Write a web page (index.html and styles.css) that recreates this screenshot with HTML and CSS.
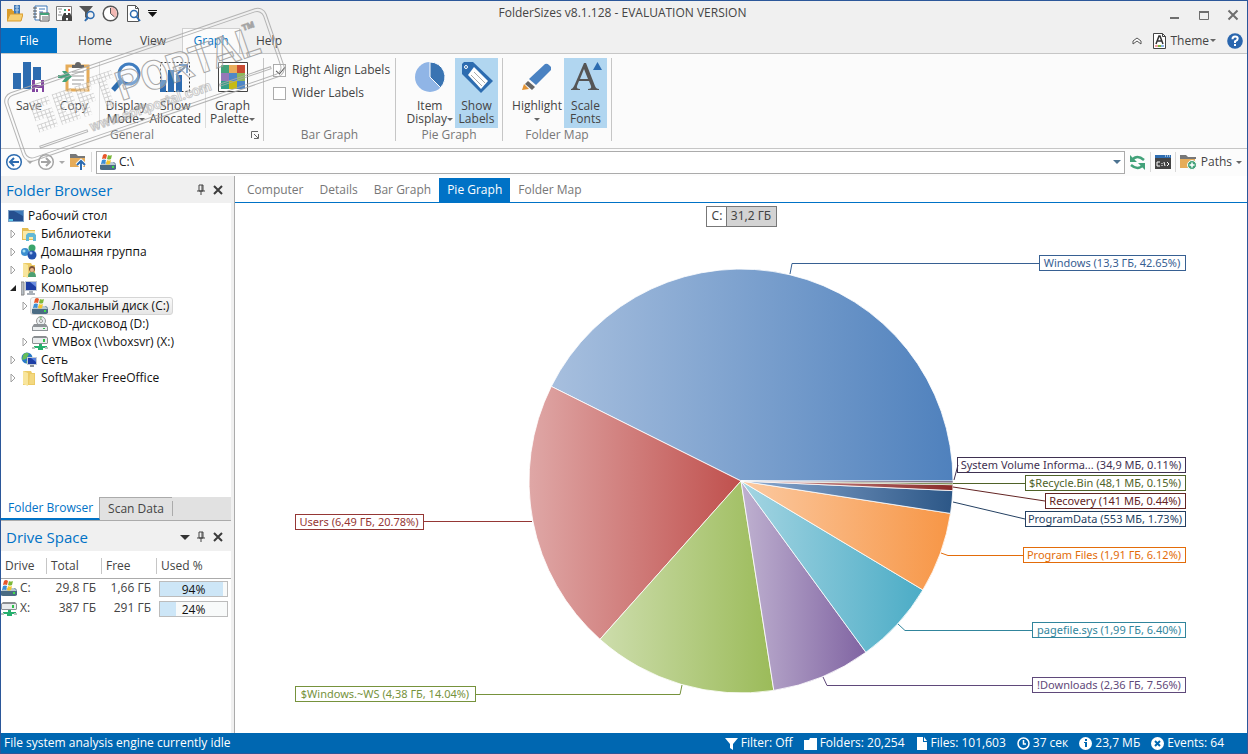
FILE: index.html
```html
<!DOCTYPE html>
<html lang="en">
<head>
    <meta charset="UTF-8">
    <meta name="viewport" content="width=device-width, initial-scale=1.0">
    <title>FolderSizes</title>
    <link rel="stylesheet" href="styles.css">
</head>
<body>
    <!-- Shared icons -->
    <svg width="0" height="0" class="defs" aria-hidden="true">
        <symbol id="drive-win" viewBox="0 0 16 16">
            <path d="M1 10l2-2h11l2 2v5H1z" fill="#5d7f96"/>
            <path d="M0 11h16v4q-1 1-2 1H2q-2 0-2-1z" fill="#4b6c84"/>
            <path d="M0 11l3-3h10l3 3z" fill="#b9c8d2"/>
            <path d="M12 12h2v2h-2z" fill="#3fe04a"/>
            <path d="M3 1q2-2 4 0L6 5Q4 4 2 5z" fill="#e8562a"/>
            <path d="M8 1q2 1 4 0l-1 4q-2 1-4 0z" fill="#7cb83a"/>
            <path d="M2 6q2-1 4 0L5 10Q3 9 1 10z" fill="#3a8fd8"/>
            <path d="M7 6q2 1 4 0l-1 4q-2 1-4 0z" fill="#f5c52c"/>
        </symbol>
        <symbol id="drive-net" viewBox="0 0 16 16">
            <path d="M2 2h12l2 2v5l-1 1H1L0 9V4z" fill="#8b8f92"/>
            <path d="M1 4h14v5H1z" fill="#e9ecee"/>
            <path d="M11 5h2v3h-2z" fill="#2fc14a"/>
            <path d="M7 10h3v2h5v2h-4v2H6v-2H2v-2h5z" fill="#25b06e"/>
            <path d="M0 13h3v2H0zM13 13h3v2h-3z" fill="#b7c3bd"/>
        </symbol>
        <symbol id="folder" viewBox="0 0 16 16">
            <path d="M2 1h8l1 2h3v12H2z" fill="#eccb66"/>
            <path d="M2 1l5 2v13l-5-2z" fill="#f8e59c"/>
            <path d="M9 4h4v10H8z" fill="#f3d880"/>
        </symbol>
        <symbol id="pin" viewBox="0 0 10 12">
            <path d="M3 1h4v6H3zM6 1v6M1 7h8M5 7v4" fill="none" stroke="#444"/>
        </symbol>
        <symbol id="close" viewBox="0 0 12 12">
            <path d="M2 2l8 8M10 2l-8 8" fill="none" stroke="#3c3c3c" stroke-width="2"/>
        </symbol>
        <symbol id="expand" viewBox="0 0 8 10">
            <path d="M2 1l4 4-4 4z" fill="#fff" stroke="#a0a0a0"/>
        </symbol>
    </svg>

    <div class="window">
        <header class="titlebar">
            <div class="quick">
                <button class="icon-btn" aria-label="Open"><svg width="16" height="18" viewBox="0 0 16 18"><path d="M0 5h5l1 2h7v9H0z" fill="#d99b2b"/><path d="M7 1h6v10H7z" fill="#3f79b7"/><path d="M8 3h4M8 6h4M10 1v9" stroke="#b8d3ee"/><path d="M3 10h13l-2 7H0z" fill="#f6cf73" stroke="#d99b2b"/></svg></button>
                <button class="icon-btn" aria-label="Report"><svg width="17" height="17" viewBox="0 0 17 17"><path d="M2 1h12v14H2z" fill="#fff" stroke="#3f79b7"/><path d="M0 3h4M0 6h4M0 9h4M0 12h4" stroke="#555"/><path d="M6 4h6M6 7h4" stroke="#3f79b7"/><path d="M7 8h9v8H7z" fill="#fff" stroke="#555"/><path d="M7 9h9" stroke="#43a27a" stroke-width="2"/><path d="M9 12h6M9 14h6" stroke="#666"/></svg></button>
                <button class="icon-btn" aria-label="Analyze"><svg width="17" height="17" viewBox="0 0 17 17"><path d="M.5 1.500h15v14H.5z" fill="#fff" stroke="#777"/><path d="M2 4h4M3 7h2M2 10h4" stroke="#888"/><path d="M8 4h2v2H8z" fill="#3ba17b"/><path d="M12 4h2v2h-2z" fill="#cf4537"/><path d="M6 16v-4l2-4h2v2h2V8h2l2 4v4h-4v-3h-2v3z" fill="#444"/></svg></button>
                <button class="icon-btn" aria-label="Filter"><svg width="17" height="17" viewBox="0 0 17 17"><path d="M0 1h14L9 7v8l-3-3V7z" fill="#555"/><circle cx="11.500" cy="10" r="3.500" fill="#f0f0f0" stroke="#2e6cb0" stroke-width="1.500"/><path d="M9 12l-3 4" stroke="#2e6cb0" stroke-width="2"/></svg></button>
                <button class="icon-btn" aria-label="Schedule"><svg width="17" height="17" viewBox="0 0 17 17"><circle cx="8.500" cy="8.500" r="7.300" fill="#fff" stroke="#555" stroke-width="1.500"/><path d="M8.500 2a6.500 6.500 0 0 1 5 10.500l-5-4z" fill="#f3b9b4"/><path d="M8.500 3v5.500l4 3.500" fill="none" stroke="#555"/></svg></button>
                <button class="icon-btn" aria-label="Preview"><svg width="17" height="17" viewBox="0 0 17 17"><path d="M2.500.5h8l3 3v13h-11z" fill="#fff" stroke="#555"/><path d="M10.500.5v3h3" fill="none" stroke="#555"/><circle cx="9" cy="9" r="3.500" fill="#fff" stroke="#2e6cb0" stroke-width="1.500"/><path d="M11 11l4 5" stroke="#2e6cb0" stroke-width="2"/></svg></button>
                <button class="icon-btn narrow" aria-label="Customize"><svg width="9" height="8" viewBox="0 0 9 8"><path d="M0 1.500h9" stroke="#111"/><path d="M0 3h9L4.500 8z" fill="#111"/></svg></button>
            </div>
            <div class="caption">FolderSizes v8.1.128 - EVALUATION VERSION</div>
            <div class="controls">
                <button class="icon-btn" aria-label="Minimize"><svg width="12" height="12"><path d="M1 9h9" stroke="#6e6e6e" stroke-width="2"/></svg></button>
                <button class="icon-btn" aria-label="Maximize"><svg width="12" height="12"><path d="M1.500 2.500h9v8h-9z" fill="none" stroke="#6e6e6e"/><path d="M1 3h10" stroke="#6e6e6e" stroke-width="2"/></svg></button>
                <button class="icon-btn" aria-label="Close"><svg width="12" height="12"><path d="M1.500 1.500l9 9M10.500 1.500l-9 9" stroke="#6e6e6e" stroke-width="2"/></svg></button>
            </div>
        </header>

        <nav class="menu">
            <button class="menu-file">File</button>
            <button class="menu-tab">Home</button>
            <button class="menu-tab">View</button>
            <button class="menu-tab active">Graph</button>
            <button class="menu-tab">Help</button>
            <div class="menu-right">
                <button class="icon-btn" aria-label="Collapse ribbon"><svg width="10" height="8"><path d="M1 4l4-3 4 3v3L5 4 1 7z" fill="#fff" stroke="#555"/></svg></button>
                <button class="theme">
                    <svg width="13" height="16" viewBox="0 0 13 16"><path d="M.5.5h9l3 3v12H.5z" fill="#fff" stroke="#444"/><path d="M9.500.5v3h3" fill="none" stroke="#444"/><path d="M3 11l3-8h1l3 8M4 8h5" fill="none" stroke="#333" stroke-width="1.500"/><path d="M2 12h3v2H2z" fill="#f0a0a0"/><path d="M5 12h3v2H5z" fill="#7cb83a"/><path d="M8 12h3v2H8z" fill="#8ab4e8"/></svg>
                    Theme<span class="caret"></span>
                </button>
                <button class="icon-btn" aria-label="Help"><svg width="16" height="16" viewBox="0 0 16 16"><circle cx="8" cy="8" r="7.800" fill="#2a66ae"/><path d="M5.500 6.200q0-2.700 2.600-2.700t2.600 2.300Q10.700 7.200 8 8.400V10" fill="none" stroke="#fff" stroke-width="2"/><path d="M7 11h2v2H7z" fill="#fff"/></svg></button>
            </div>
        </nav>

        <section class="ribbon">
            <div class="group general">
                <div class="group-body">
                    <button class="tool">
                        <svg width="32" height="32" viewBox="0 0 32 32"><path d="M0 12h8v16H0zM10 1h8v27h-8zM20 6h8v14h-8z" fill="#2d6cb0"/><path d="M19 19h12v12H19z" fill="#8246a0"/><path d="M22 19h6v5h-6zM22 27h7v4h-7z" fill="#fff"/><path d="M23 28h2v3h-2z" fill="#8246a0"/></svg>
                        <span>Save</span>
                    </button>
                    <button class="tool">
                        <svg width="32" height="32" viewBox="0 0 32 32"><path d="M9 5h21v24H9z" fill="#fff" stroke="#e6ac59" stroke-width="3"/><path d="M14 7V4h3a3 3 0 0 1 6 0h3v3z" fill="#666"/><path d="M14 11h12M14 15h12M14 19h12M14 23h9" stroke="#999"/><path d="M0 14h7l-3-4h4l6 5.500L8 21H4l3-4H0z" fill="#43a27a"/></svg>
                        <span>Copy</span>
                    </button>
                    <i class="tool-sep"></i>
                    <button class="tool">
                        <svg width="32" height="32" viewBox="0 0 32 32"><circle cx="19" cy="13" r="10" fill="#fafcff" stroke="#3f7dc0" stroke-width="3"/><path d="M11 20L3 29" stroke="#2d6cb0" stroke-width="5"/></svg>
                        <span>Display<br>Mode<i class="caret"></i></span>
                    </button>
                    <button class="tool">
                        <svg width="32" height="32" viewBox="0 0 32 32"><path d="M1.500 1.500h29v29h-29z" fill="none" stroke="#333" stroke-dasharray="2 2"/><path d="M1 19h6v12H1zM9 9h6v22H9zM17 14h6v17h-6z" fill="#2d6cb0"/><path d="M17 14l9-8M20 4h8v8" fill="none" stroke="#4a82c2" stroke-width="2"/></svg>
                        <span>Show<br>Allocated</span>
                    </button>
                    <i class="tool-sep"></i>
                    <button class="tool">
                        <svg width="32" height="32" viewBox="0 0 32 32"><path d="M1.500 1.500h29v29h-29z" fill="#fff" stroke="#444"/><path d="M4 4h8v8H4z" fill="#43a27a"/><path d="M12 4h8v8h-8z" fill="#e9ac5b"/><path d="M20 4h8v8h-8z" fill="#c94b33"/><path d="M4 12h8v8H4z" fill="#9578b8"/><path d="M12 12h8v8h-8z" fill="#4f87c7"/><path d="M20 12h8v8h-8z" fill="#8fb75a"/><path d="M4 20h8v8H4z" fill="#37a087"/><path d="M12 20h8v8h-8z" fill="#c7bb14"/><path d="M20 20h8v8h-8z" fill="#4f87c7"/></svg>
                        <span>Graph<br>Palette<i class="caret"></i></span>
                    </button>
                </div>
                <div class="group-title">General</div>
                <button class="launcher" aria-label="General options"><svg width="8" height="8"><path d="M.5 7V.5H7M3 3l4 4M7.500 3v4.500H3" fill="none" stroke="#666"/></svg></button>
            </div>
            <div class="group bar">
                <div class="group-body checks">
                    <label><input type="checkbox" checked>Right Align Labels</label>
                    <label><input type="checkbox">Wider Labels</label>
                </div>
                <div class="group-title">Bar Graph</div>
            </div>
            <div class="group pie">
                <div class="group-body">
                    <button class="tool">
                        <svg width="32" height="32" viewBox="0 0 32 32"><circle cx="16" cy="16" r="15" fill="#90b5e6"/><path d="M16 16V1a15 15 0 0 1 10.600 25.600z" fill="#3a74b2" stroke="#fff"/></svg>
                        <span>Item<br>Display<i class="caret"></i></span>
                    </button>
                    <button class="tool pressed">
                        <svg width="32" height="32" viewBox="0 0 32 32"><path d="M3 1h9l20 19-12 12L1 13V3z" fill="#2d6cb0"/><path d="M13 6l14 14-7 8L7 14z" fill="#fff"/><circle cx="5" cy="6" r="1.500" fill="none" stroke="#fff"/><path d="M13 11l11 11M10 14l11 11" stroke="#aaa"/></svg>
                        <span>Show<br>Labels</span>
                    </button>
                </div>
                <div class="group-title">Pie Graph</div>
            </div>
            <div class="group map">
                <div class="group-body">
                    <button class="tool">
                        <svg width="32" height="32" viewBox="0 0 32 32"><path d="M8 18L24 3q2-1 4 1l2 2v3L15 24z" fill="#4a82c2"/><path d="M7 20l7 6-3 3-7-6z" fill="#666"/><path d="M3 23l5 5-7 1z" fill="#e39435"/></svg>
                        <span>Highlight<br><i class="caret"></i></span>
                    </button>
                    <button class="tool pressed">
                        <svg width="32" height="32" viewBox="0 0 32 32"><path d="M1 29v-1q2 0 4-5L14 2h2l9 23q1 3 4 3v1H18v-1q4 0 3-3l-2-5H9l-2 5q-1 3 3 3v1zM10 18h8L14 8z" fill="#555"/><path d="M23 9l4.500-8L32 9z" fill="#2d6cb0"/></svg>
                        <span>Scale<br>Fonts</span>
                    </button>
                </div>
                <div class="group-title">Folder Map</div>
            </div>
        </section>

        <div class="navbar">
            <button class="icon-btn" aria-label="Back"><svg width="18" height="18" viewBox="0 0 18 18"><circle cx="9" cy="9" r="7.300" fill="#fff" stroke="#2d6cb0" stroke-width="1.500"/><path d="M14 9H5M9 5L5 9l4 4" fill="none" stroke="#2d6cb0" stroke-width="2"/></svg></button>
            <i class="caret dim"></i>
            <button class="icon-btn" aria-label="Forward"><svg width="18" height="18" viewBox="0 0 18 18"><circle cx="9" cy="9" r="7.300" fill="#fff" stroke="#a5a5a5" stroke-width="1.500"/><path d="M4 9h9M9 5l4 4-4 4" fill="none" stroke="#a5a5a5" stroke-width="2"/></svg></button>
            <i class="caret dim"></i>
            <button class="icon-btn" aria-label="Up"><svg width="18" height="18" viewBox="0 0 18 18"><path d="M1 1h6l2 2h7v2H1z" fill="#777"/><path d="M1 5h15v9H1z" fill="#e6ac59"/><path d="M12 16V8M8 12l4-4 4 4" fill="none" stroke="#fff" stroke-width="4"/><path d="M12 17V8M8 12l4-4 4 4" fill="none" stroke="#2d6cb0" stroke-width="2"/></svg></button>
            <i class="nav-sep"></i>
            <div class="address">
                <svg width="16" height="16"><use href="#drive-win"/></svg>
                <input type="text" value="C:\" aria-label="Path">
                <button class="icon-btn" aria-label="Path history"><i class="caret blue"></i></button>
            </div>
            <button class="icon-btn" aria-label="Refresh"><svg width="17" height="17" viewBox="0 0 17 17"><path d="M3 6q5-6 12 0M14 11q-5 6-12 0" fill="none" stroke="#43a27a" stroke-width="2.500"/><path d="M1 1v7h7zM16 16V9H9z" fill="#43a27a"/></svg></button>
            <i class="nav-sep"></i>
            <button class="icon-btn" aria-label="Command prompt"><svg width="16" height="14" viewBox="0 0 16 14"><path d="M0 0h16v14H0z" fill="#444"/><path d="M0 0h16v3H0z" fill="#2d6cb0"/><path d="M10 1h1M12 1h1M14 1h1" stroke="#fff"/><path d="M5 7H2v4h3M7 8v1M7 10v1M9 7l1 4M12 7l2 2-2 2" fill="none" stroke="#fff"/></svg></button>
            <i class="nav-sep"></i>
            <button class="paths">
                <svg width="17" height="16" viewBox="0 0 17 16"><path d="M0 1h6l2 2h8v2H0z" fill="#777"/><path d="M0 5h15v9H0z" fill="#e6ac59"/><circle cx="12" cy="11" r="4.500" fill="#43a27a" stroke="#fff"/><path d="M9.500 11h5M12 8.500v5" stroke="#fff" stroke-width="1.500"/></svg>
                Paths <i class="caret"></i>
            </button>
        </div>

        <div class="workspace">
            <aside class="sidebar">
                <div class="panel-head">
                    <h2>Folder Browser</h2>
                    <button class="icon-btn" aria-label="Pin"><svg width="10" height="12"><use href="#pin"/></svg></button>
                    <button class="icon-btn" aria-label="Close panel"><svg width="12" height="12"><use href="#close"/></svg></button>
                </div>
                <ul class="tree">
                    <li class="root"><svg width="16" height="16" viewBox="0 0 16 16"><path d="M0 2h16v12H0z" fill="#7ba0c6"/><path d="M1 3h14v10H1z" fill="#254f8f"/><path d="M6 3h9v5z" fill="#3d79b8"/><path d="M1 11h4v2H1z" fill="#55c3e8"/></svg><span>Рабочий стол</span></li>
                    <li><svg width="8" height="10"><use href="#expand"/></svg><svg width="16" height="16" viewBox="0 0 16 16"><path d="M1 2h6l1 2h6v10H1z" fill="#e5bd52"/><path d="M2 5h12v8H2z" fill="#f9e9a8"/><path d="M5 9l2-2h6l2 2v6h-3v-4H8v4H5z" fill="#62b8d6"/></svg><span>Библиотеки</span></li>
                    <li><svg width="8" height="10"><use href="#expand"/></svg><svg width="16" height="16" viewBox="0 0 16 16"><circle cx="11" cy="4" r="3.500" fill="#3aa56c"/><circle cx="4" cy="8" r="4" fill="#3c8fd0"/><circle cx="11" cy="11" r="4.500" fill="#2353ad"/><circle cx="3" cy="7" r="1.500" fill="#a5ddf2"/><circle cx="10" cy="9" r="1.500" fill="#9dbdf0"/></svg><span>Домашняя группа</span></li>
                    <li><svg width="8" height="10"><use href="#expand"/></svg><svg width="16" height="16" viewBox="0 0 16 16"><use href="#folder"/><circle cx="11" cy="7" r="3" fill="#7b5138"/><circle cx="11" cy="8" r="2" fill="#eab78d"/><path d="M7 15q0-5 4-5t4 5z" fill="#4c9f72"/></svg><span>Paolo</span></li>
                    <li><svg width="8" height="10"><path d="M7 2v6H1z" fill="#222"/></svg><svg width="16" height="16" viewBox="0 0 16 16"><path d="M0 2h3v13H0z" fill="#b8bfc6" stroke="#888"/><path d="M4 1h12v10H4z" fill="#c3cbd5"/><path d="M5 2h10v8H5z" fill="#1d3ea5"/><path d="M9 2h6v5z" fill="#6b8de0"/><path d="M8 11h4v2h2v2H6v-2h2z" fill="#aab1b9"/></svg><span>Компьютер</span></li>
                    <li class="child selected"><svg width="8" height="10"><use href="#expand"/></svg><div class="node"><svg width="16" height="16"><use href="#drive-win"/></svg><span>Локальный диск (C:)</span></div></li>
                    <li class="child"><svg width="8" height="10"></svg><div class="node"><svg width="16" height="16" viewBox="0 0 16 16"><circle cx="9" cy="5" r="4.500" fill="#e9eef0" stroke="#999"/><circle cx="9" cy="5" r="1.500" fill="#fff" stroke="#999"/><path d="M7 1l2 3 1-3z" fill="#8fc98f"/><path d="M0 11l2-3h12l2 3v4H0z" fill="#8f9498"/><path d="M1 11h14v3H1z" fill="#eceff0"/><path d="M11 12h2v1h-2z" fill="#2fc14a"/></svg><span>CD-дисковод (D:)</span></div></li>
                    <li class="child"><svg width="8" height="10"><use href="#expand"/></svg><div class="node"><svg width="16" height="16"><use href="#drive-net"/></svg><span>VMBox (\\vboxsvr) (X:)</span></div></li>
                    <li><svg width="8" height="10"><use href="#expand"/></svg><svg width="16" height="16" viewBox="0 0 16 16"><circle cx="6" cy="6" r="5.500" fill="#2a79c8"/><path d="M2 3q3-4 6-1L5 7 1 8zM5 9l3 1-2 2z" fill="#66bd58"/><path d="M6 5h10v8H6z" fill="#c3cbd5"/><path d="M7 6h8v6H7z" fill="#1d3ea5"/><path d="M10 6h5v4z" fill="#5680de"/><path d="M9 13h4v2H9z" fill="#8b939b"/></svg><span>Сеть</span></li>
                    <li><svg width="8" height="10"><use href="#expand"/></svg><svg width="16" height="16"><use href="#folder"/></svg><span>SoftMaker FreeOffice</span></li>
                </ul>
                <div class="side-tabs">
                    <button class="side-tab active">Folder Browser</button>
                    <button class="side-tab">Scan Data</button>
                    <i class="side-sep"></i>
                </div>
                <div class="panel-head drives-head">
                    <h2>Drive Space</h2>
                    <button class="icon-btn" aria-label="Panel menu"><i class="caret big"></i></button>
                    <button class="icon-btn" aria-label="Pin"><svg width="10" height="12"><use href="#pin"/></svg></button>
                    <button class="icon-btn" aria-label="Close panel"><svg width="12" height="12"><use href="#close"/></svg></button>
                </div>
                <div class="drives">
                    <table>
                        <thead>
                            <tr><th class="c-drive"><span>Drive</span></th><th class="c-size"><span>Total</span></th><th class="c-size"><span>Free</span></th><th><span>Used %</span></th></tr>
                        </thead>
                        <tbody>
                            <tr>
                                <td><div class="drive"><svg width="16" height="16"><use href="#drive-win"/></svg>C:</div></td>
                                <td class="num">29,8 ГБ</td>
                                <td class="num">1,66 ГБ</td>
                                <td><div class="usage"><div class="fill" style="width: 94%"></div><span>94%</span></div></td>
                            </tr>
                            <tr>
                                <td><div class="drive"><svg width="16" height="16"><use href="#drive-net"/></svg>X:</div></td>
                                <td class="num">387 ГБ</td>
                                <td class="num">291 ГБ</td>
                                <td><div class="usage"><div class="fill" style="width: 24%"></div><span>24%</span></div></td>
                            </tr>
                        </tbody>
                    </table>
                </div>
            </aside>

            <main class="content">
                <div class="tabs">
                    <button class="tab">Computer</button>
                    <button class="tab">Details</button>
                    <button class="tab">Bar Graph</button>
                    <button class="tab active">Pie Graph</button>
                    <button class="tab">Folder Map</button>
                </div>
                <div class="chart">
                    <svg class="pie-svg" viewBox="0 0 1012 530" role="img" aria-label="Space used on C:">
                        <defs>
                            <linearGradient id="g-win"><stop offset="0" stop-color="#a7bfde"/><stop offset="1" stop-color="#4f81bd"/></linearGradient>
                            <linearGradient id="g-users"><stop offset="0" stop-color="#dfa7a6"/><stop offset="1" stop-color="#c0504d"/></linearGradient>
                            <linearGradient id="g-ws"><stop offset="0" stop-color="#cdddac"/><stop offset="1" stop-color="#9bbb59"/></linearGradient>
                            <linearGradient id="g-down"><stop offset="0" stop-color="#bfb1d0"/><stop offset="1" stop-color="#8064a2"/></linearGradient>
                            <linearGradient id="g-page"><stop offset="0" stop-color="#a5d5e2"/><stop offset="1" stop-color="#4bacc6"/></linearGradient>
                            <linearGradient id="g-prog"><stop offset="0" stop-color="#fbcaa2"/><stop offset="1" stop-color="#f79646"/></linearGradient>
                            <linearGradient id="g-data"><stop offset="0" stop-color="#8ba9d0"/><stop offset="1" stop-color="#2c5787"/></linearGradient>
                            <linearGradient id="g-rec"><stop offset="0" stop-color="#d29a99"/><stop offset="1" stop-color="#8a2c2a"/></linearGradient>
                        </defs>
                        <g stroke="#fff" stroke-opacity=".8">
                            <path d="M506 278L718 278A212 212 0 0 0 316.300 183.400Z" fill="url(#g-win)"/>
                            <path d="M506 278L316.300 183.400A212 212 0 0 0 365 436.300Z" fill="url(#g-users)"/>
                            <path d="M506 278L365 436.300A212 212 0 0 0 538.800 487.400Z" fill="url(#g-ws)"/>
                            <path d="M506 278L538.800 487.400A212 212 0 0 0 630.900 449.300Z" fill="url(#g-down)"/>
                            <path d="M506 278L630.900 449.300A212 212 0 0 0 687.900 386.900Z" fill="url(#g-page)"/>
                            <path d="M506 278L687.900 386.900A212 212 0 0 0 715.500 310.400Z" fill="url(#g-prog)"/>
                            <path d="M506 278L715.500 310.400A212 212 0 0 0 717.800 287.600Z" fill="url(#g-data)"/>
                            <path d="M506 278L717.800 287.600A212 212 0 0 0 718 281.700Z" fill="url(#g-rec)"/>
                            <path d="M506 278L718 281.700L718 279.800Z" fill="#5f7530" stroke-opacity=".6"/>
                            <path d="M506 278L718 279.800L718 278Z" fill="#4d3b62" stroke-opacity=".6"/>
                        </g>
                        <g class="leader">
                            <path class="c-win" d="M555 71l2-10.500H804"/>
                            <path class="c-users" d="M297 318.500H188"/>
                            <path class="c-ws" d="M447 482l-2 9.500H240"/>
                            <path class="c-down" d="M588 474l4 8.500H797"/>
                            <path class="c-page" d="M663 421l7 6.500H797"/>
                            <path class="c-prog" d="M706 350l7 2.500H788"/>
                            <path class="c-data" d="M718 299l72 17"/>
                            <path class="c-rec" d="M718 284l92 14"/>
                            <path class="c-bin" d="M718 280.500H790"/>
                            <path class="c-svi" d="M719 277l4-15"/>
                        </g>
                        <g class="tag">
                            <rect class="c-root" x="471.500" y="3.500" width="70" height="20"/>
                            <rect class="root-size" x="491.500" y="3.500" width="50" height="20"/>
                            <text class="t-root" x="482" y="17">C:</text>
                            <text class="t-root" x="516" y="17">31,2 ГБ</text>
                            <rect class="c-win" x="804.500" y="52.500" width="146" height="15"/>
                            <text class="t-win" x="877" y="64">Windows (13,3 ГБ, 42.65%)</text>
                            <rect class="c-svi" x="722.500" y="254.500" width="228" height="15"/>
                            <text class="t-svi" x="836" y="266">System Volume Informa... (34,9 МБ, 0.11%)</text>
                            <rect class="c-bin" x="790.500" y="272.500" width="160" height="15"/>
                            <text class="t-bin" x="870" y="284">$Recycle.Bin (48,1 МБ, 0.15%)</text>
                            <rect class="c-rec" x="810.500" y="290.500" width="140" height="15"/>
                            <text class="t-rec" x="880" y="302">Recovery (141 МБ, 0.44%)</text>
                            <rect class="c-data" x="790.500" y="308.500" width="160" height="15"/>
                            <text class="t-data" x="870" y="320">ProgramData (553 МБ, 1.73%)</text>
                            <rect class="c-prog" x="788.500" y="344.500" width="162" height="15"/>
                            <text class="t-prog" x="869" y="356">Program Files (1,91 ГБ, 6.12%)</text>
                            <rect class="c-page" x="797.500" y="419.500" width="153" height="15"/>
                            <text class="t-page" x="874" y="431">pagefile.sys (1,99 ГБ, 6.40%)</text>
                            <rect class="c-down" x="797.500" y="474.500" width="153" height="15"/>
                            <text class="t-down" x="874" y="486">!Downloads (2,36 ГБ, 7.56%)</text>
                            <rect class="c-users" x="60.500" y="311.500" width="128" height="15"/>
                            <text class="t-users" x="124" y="323">Users (6,49 ГБ, 20.78%)</text>
                            <rect class="c-ws" x="60.500" y="483.500" width="180" height="15"/>
                            <text class="t-ws" x="150" y="495">$Windows.~WS (4,38 ГБ, 14.04%)</text>
                        </g>
                    </svg>
                </div>
            </main>
        </div>

        <footer class="status">
            <span class="idle">File system analysis engine currently idle</span>
            <span class="stat"><svg width="13" height="13"><path d="M0 1h13L8 7v6l-3-2V7z" fill="#fff"/></svg>Filter: Off</span>
            <span class="stat"><svg width="13" height="13"><path d="M0 3h5l1-2h7v12H0z" fill="#fff"/></svg>Folders: 20,254</span>
            <span class="stat"><svg width="12" height="13"><path d="M1 0h6v5h4v8H1zM8 0l3 4H8z" fill="#fff"/></svg>Files: 101,603</span>
            <span class="stat"><svg width="13" height="13"><circle cx="6.500" cy="6.500" r="5.500" fill="none" stroke="#fff" stroke-width="1.500"/><path d="M6.500 3v4H9" fill="none" stroke="#fff" stroke-width="1.500"/></svg>37 сек</span>
            <span class="stat"><svg width="13" height="13"><circle cx="6.500" cy="6.500" r="6.500" fill="#fff"/><path d="M6 2h2v2H6zM5 5h3v5H6V6H5z" fill="#0067b1"/></svg>23,7 МБ</span>
            <span class="stat"><svg width="13" height="13"><circle cx="6.500" cy="6.500" r="6.500" fill="#fff"/><path d="M4 4l5 5M9 4l-5 5" stroke="#0067b1" stroke-width="2"/></svg>Events: 64</span>
        </footer>

        <!-- Portal stamp lying over the ribbon -->
        <svg class="stamp" width="300" height="170" aria-hidden="true">
            <defs>
                <pattern id="cells" width="4" height="4" patternUnits="userSpaceOnUse"><path d="M0 0h4v4H0z" fill="#9a9a9a"/><path d="M1 1h3v3H1z" fill="#fff"/></pattern>
            </defs>
            <g transform="translate(0 94) rotate(-19)">
                <rect class="stamp-edge" x="1" y="1" width="276" height="72" rx="9"/>
                <rect class="stamp-edge" x="4" y="4" width="270" height="66" rx="7"/>
                <path class="stamp-cells" fill="url(#cells)" d="M24 16h20v8H32v4h12v20H24v-8h12v-4H24zM48 16h20v32H48zm8 8v16h4V24zM72 16h16v8h-8v4h8v8h-8v12h-8zM88 12h24v8h-8v28h-8V20h-8z"/>
                <text class="stamp-name" x="112" y="45">PORTAL</text>
                <text class="stamp-tm" x="250" y="18">TM</text>
                <text class="stamp-url" x="74" y="64">www.softportal.com</text>
                <path class="stamp-edge" d="M20 61h50v2H20zM210 61h54v2h-54z"/>
            </g>
        </svg>
    </div>
</body>
</html>
```
FILE: styles.css
```css
* {
    margin: 0;
    padding: 0;
    box-sizing: border-box;
}

body {
    height: 100vh;
    font-family: "Open Sans", "Noto Sans", sans-serif;
    font-size: 12px;
    line-height: 16px;
    color: #444;
}

button {
    border: none;
    background: none;
    font: inherit;
    color: inherit;
    white-space: nowrap;
}

svg {
    display: block;
    flex: none;
}

.defs {
    position: absolute;
}

.window {
    position: relative;
    display: flex;
    flex-direction: column;
    height: 100vh;
    border: 1px solid #2b579a;
    background: #fff;
    overflow: hidden;
}

.icon-btn {
    display: flex;
    align-items: center;
    justify-content: center;
}

.caret {
    display: inline-block;
    border: 3px solid transparent;
    border-top-color: #666;
    border-bottom: none;
    vertical-align: middle;
}

.caret.dim {
    border-top-color: #aaa;
}

.caret.blue {
    border-width: 4px;
    border-bottom: none;
    border-top-color: #4d7391;
}

.caret.big {
    border-width: 5px;
    border-bottom: none;
    border-top-color: #333;
}

/* Title bar */
.titlebar {
    display: flex;
    align-items: center;
    height: 27px;
    padding: 0 8px 3px 5px;
    background: #f0f0f0;
}

.quick {
    display: flex;
    flex: 1;
    gap: 6px;
}

.quick .icon-btn {
    width: 17px;
}

.quick .icon-btn:first-child {
    margin-right: 4px;
}

.quick .narrow {
    width: 9px;
}

.controls {
    display: flex;
    flex: 1;
    justify-content: flex-end;
    gap: 17px;
    padding-top: 3px;
}

/* Menu row */
.menu {
    display: flex;
    height: 25px;
    padding-right: 4px;
    background: #f0f0f0;
}

.menu-file {
    width: 56px;
    background: #0072c6;
    color: #fff;
}

.menu-tab {
    width: 58px;
    margin-left: 9px;
}

.menu-tab + .menu-tab {
    margin-left: 0;
}

.menu-tab.active {
    color: #0072c6;
    background: #fbfbfb;
    border: 1px solid #d0d0d0;
    border-bottom: none;
}

.menu-right {
    display: flex;
    flex: 1;
    align-items: center;
    justify-content: flex-end;
    gap: 11px;
}

.theme,
.paths {
    display: flex;
    align-items: center;
    gap: 4px;
}

.theme .caret {
    margin-left: -3px;
}

/* Ribbon */
.ribbon {
    display: flex;
    height: 96px;
    padding-top: 4px;
    border-top: 1px solid #c6c6c6;
    border-bottom: 1px solid #c6c6c6;
    background: #fbfbfb;
}

.group {
    position: relative;
    display: flex;
    flex-direction: column;
    height: 83px;
    border-right: 1px solid #c6c6c6;
}

.general {
    width: 263px;
}

.bar {
    width: 132px;
}

.pie {
    width: 107px;
}

.map {
    width: 109px;
}

.group-body {
    display: flex;
    justify-content: flex-end;
    height: 70px;
    padding-right: 4px;
    gap: 2px;
}

.general .group-body {
    padding-right: 8px;
}

.tool {
    display: flex;
    flex-direction: column;
    align-items: center;
    min-width: 43px;
    padding-top: 3px;
    gap: 6px;
    line-height: 13px;
}

.tool.pressed {
    background: #b1d6f0;
}

.tool-sep {
    width: 1px;
    margin: 4px 2px 0;
    background: #dcdcdc;
}

.group-title {
    line-height: 13px;
    text-align: center;
    color: #777;
}

.launcher {
    position: absolute;
    right: 4px;
    bottom: 2px;
}

.checks {
    flex-direction: column;
    justify-content: flex-start;
    padding: 4px 0 0 9px;
    gap: 7px;
}

.checks label {
    display: flex;
    align-items: center;
    gap: 6px;
    white-space: nowrap;
}

.checks input {
    appearance: none;
    width: 13px;
    height: 13px;
    border: 1px solid #ababab;
    background: #fff;
}

.checks input:checked::before {
    content: "";
    display: block;
    width: 4px;
    height: 8px;
    margin: 0 0 0 4px;
    border: solid #555;
    border-width: 0 1px 1px 0;
    transform: rotate(40deg);
}

/* Navigation bar */
.navbar {
    display: flex;
    align-items: center;
    height: 27px;
    padding: 0 5px 1px 4px;
    gap: 4px;
    background: #fcfcfc;
}

.nav-sep {
    width: 1px;
    height: 20px;
    background: #d8d8d8;
}

.address {
    display: flex;
    flex: 1;
    align-items: center;
    height: 23px;
    padding: 0 3px;
    gap: 3px;
    border: 1px solid #ababab;
    background: #fff;
}

.address input {
    flex: 1;
    min-width: 0;
    border: none;
    outline: none;
    font: inherit;
    color: #222;
}

/* Workspace */
.workspace {
    display: flex;
    flex: 1;
    min-height: 0;
}

.sidebar {
    display: flex;
    flex-direction: column;
    width: 234px;
    padding-right: 3px;
    border-right: 1px solid #ababab;
    background: #f0f0f0;
}

.panel-head {
    display: flex;
    align-items: center;
    height: 27px;
    padding: 0 7px 0 5px;
    gap: 6px;
    background: #f0f0f0;
}

.panel-head h2 {
    flex: 1;
    font-size: 15px;
    font-weight: normal;
    line-height: 20px;
    color: #0072c6;
}

.drives-head {
    height: 30px;
    padding-top: 2px;
}

.tree {
    flex: 1;
    padding-top: 4px;
    background: #fff;
    list-style: none;
    color: #111;
}

.tree li {
    display: flex;
    align-items: center;
    height: 18px;
    padding-left: 8px;
    gap: 4px;
    white-space: nowrap;
}

.tree li.root {
    padding-left: 7px;
}

.tree li.child {
    padding-left: 20px;
    gap: 1px;
}

.node {
    display: flex;
    align-items: center;
    height: 18px;
    padding: 0 3px 0 1px;
    gap: 4px;
    border: 1px solid transparent;
    border-radius: 3px;
}

.selected .node {
    border-color: #d5d5d5;
    background: linear-gradient(#fafafa, #e6e6e6);
}

.side-tabs {
    display: flex;
    align-items: center;
    height: 24px;
    border-bottom: 1px solid #ababab;
    background: #e1e1e1;
}

.side-tab {
    height: 23px;
    padding: 0 8px;
    border-top: 1px solid #ababab;
}

.side-tab.active {
    padding: 0 6px 0 7px;
    border-top: none;
    border-right: 1px solid #ababab;
    border-bottom: 2px solid #0072c6;
    background: #fff;
    color: #0072c6;
}

.side-sep {
    flex: 1;
    height: 15px;
    border-left: 1px solid #ababab;
}

.drives {
    height: 182px;
    background: #fff;
}

.drives table {
    width: 100%;
    border-collapse: collapse;
    table-layout: fixed;
}

.drives th {
    height: 27px;
    padding: 4px 0 0;
    border-bottom: 1px solid #ababab;
    font-weight: normal;
    text-align: left;
}

.drives th span {
    display: block;
    padding-left: 4px;
    border-right: 1px solid #c6c6c6;
}

.drives th:last-child span {
    border-right: none;
}

.c-drive {
    width: 46px;
}

.c-size {
    width: 55px;
}

.drives td {
    height: 20px;
}

.drives .num {
    padding-right: 6px;
    text-align: right;
}

.drive {
    display: flex;
    align-items: center;
    gap: 3px;
}

.usage {
    position: relative;
    height: 16px;
    margin: 2px 3px 0 2px;
    border: 1px solid #bcbcbc;
    background: #f8fafa;
    line-height: 15px;
    text-align: center;
    color: #111;
}

.usage .fill {
    position: absolute;
    inset: 0 auto 0 0;
    background: #cde6f7;
}

.usage span {
    position: relative;
}

/* Content */
.content {
    display: flex;
    flex: 1;
    flex-direction: column;
    min-width: 0;
}

.tabs {
    display: flex;
    padding: 2px 0 0 4px;
    border-bottom: 1px solid #0072c6;
}

.tab {
    height: 24px;
    padding: 0 8px;
    color: #777;
}

.tab.active {
    background: #0072c6;
    color: #fff;
}

.chart {
    flex: 1;
    min-height: 0;
}

.pie-svg {
    width: 100%;
    height: 100%;
}

.leader path,
.tag rect {
    fill: none;
}

.tag text {
    font-family: "Noto Sans", sans-serif;
    font-size: 11px;
    text-anchor: middle;
}

.c-root { stroke: #777; }
.c-win { stroke: #376092; }
.c-users { stroke: #953735; }
.c-ws { stroke: #76923c; }
.c-down { stroke: #5f497a; }
.c-page { stroke: #31859c; }
.c-prog { stroke: #e36c0a; }
.c-data { stroke: #244062; }
.c-rec { stroke: #632423; }
.c-bin { stroke: #4f6228; }
.c-svi { stroke: #3f3151; }

.tag .t-root { font-size: 12px; fill: #444; }
.t-win { fill: #376092; }
.t-users { fill: #953735; }
.t-ws { fill: #76923c; }
.t-down { fill: #5f497a; }
.t-page { fill: #31859c; }
.t-prog { fill: #e36c0a; }
.t-data { fill: #244062; }
.t-rec { fill: #632423; }
.t-bin { fill: #4f6228; }
.t-svi { fill: #3f3151; }

.tag .root-size {
    fill: #d3d3d3;
    stroke: #777;
}

/* Status bar */
.status {
    display: flex;
    align-items: center;
    height: 20px;
    padding: 0 23px 0 3px;
    gap: 11px;
    background: #0067b1;
    color: #fff;
}

.idle {
    flex: 1;
}

.stat {
    display: flex;
    align-items: center;
    gap: 3px;
    white-space: nowrap;
}

/* Stamp */
.stamp {
    position: absolute;
    top: 0;
    left: 0;
    opacity: .85;
    pointer-events: none;
}

.stamp-edge {
    fill: none;
    stroke: #aaa;
}

.stamp-cells {
    opacity: .5;
}

.stamp text {
    font-family: Roboto, sans-serif;
    font-weight: bold;
    fill: #fff;
    fill-opacity: .4;
    stroke: #999;
}

.stamp .stamp-name {
    font-size: 40px;
}

.stamp .stamp-tm {
    font-size: 8px;
}

.stamp .stamp-url {
    font-size: 14px;
    stroke-opacity: .6;
}
```
